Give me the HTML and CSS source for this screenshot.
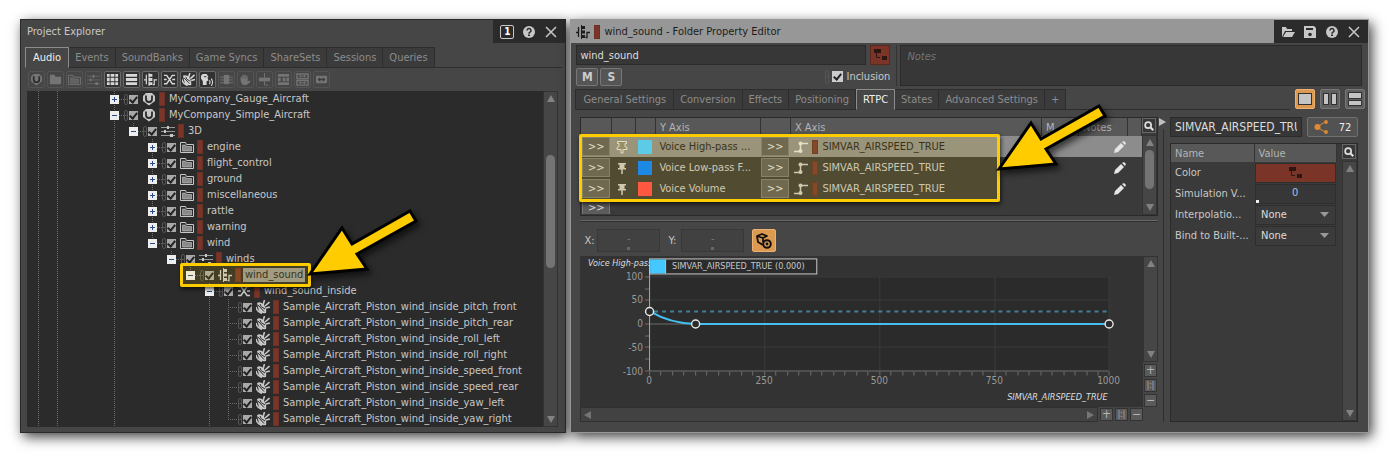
FILE: index.html
```
<!DOCTYPE html>
<html lang="en">
<head>
    <meta charset="UTF-8">
    <meta name="viewport" content="width=device-width, initial-scale=1.0">
    <title>wind_sound - Folder Property Editor</title>
    <link rel="stylesheet" href="styles.css">
</head>
<body>
    <!-- Icon sprite -->
    <svg class="sprite" width="0" height="0" aria-hidden="true">
        <symbol id="i-unit" viewBox="0 0 14 14"><path d="M4 1h6l3 3v5l-6 4.500L1 9V4z" fill="currentColor"/><path d="M4 3.500V7a3 3 0 0 0 6 0V3.500" fill="none" stroke="#2b2b2b" stroke-width="1.800"/></symbol>
        <symbol id="i-folder" viewBox="0 0 14 14"><path d="M.5 2.500h5l1 2h7v8H.5z" fill="none" stroke="currentColor"/><path d="M2.500 5h3l1 1.500h5V11h-9z" fill="currentColor" fill-opacity=".6" stroke="currentColor" stroke-opacity=".6"/></symbol>
        <symbol id="i-folder-full" viewBox="0 0 14 14"><path d="M1 2h5l1 2h6v8H1z" fill="currentColor"/></symbol>
        <symbol id="i-mixer" viewBox="0 0 14 14"><path d="M0 3.500h14M0 7.500h14M0 11.500h14" stroke="currentColor" stroke-opacity=".7"/><path d="M6 2h2v3H6zM3 6h2v3H3zM9 10h3v3H9z" fill="currentColor"/></symbol>
        <symbol id="i-grid" viewBox="0 0 14 14"><path d="M1 1h3v3H1zM5 1h4v3H5zM10 1h3v3h-3zM1 5h3v4H1zM5 5h4v4H5zM10 5h3v4h-3zM1 10h3v3H1zM5 10h4v3H5zM10 10h3v3h-3z" fill="currentColor"/></symbol>
        <symbol id="i-list" viewBox="0 0 14 14"><path d="M1 1h12v3H1zM1 5.500h12v3H1zM1 10h12v3H1z" fill="currentColor"/></symbol>
        <symbol id="i-actor" viewBox="0 0 14 14"><path d="M0 7.500h2.500M2.500 2v10M9.500 12.500h1.500v-5h3" fill="none" stroke="currentColor" stroke-width="1.300"/><path d="M5 1h4v3H5zM5 5.500h4v3H5zM5 10h4v3H5z" fill="currentColor"/><path d="M5.500 0v14" stroke="currentColor"/></symbol>
        <symbol id="i-random" viewBox="0 0 14 14"><path d="M1 2.500h3l6 9h3M1 11.500h3l6-9h3M1 7h3M10 7h3" fill="none" stroke="currentColor" stroke-width="1.500"/></symbol>
        <symbol id="i-sfx" viewBox="0 0 14 14"><path d="M1 3q4-2 7 2t2 8q-5 1-7-2z" fill="currentColor"/><path d="M0 7q1 5 6 6.500" fill="none" stroke="currentColor" stroke-width="1.500"/><path d="M2 5l6 6.500M4 4q0 3 5 5" fill="none" stroke="#2b2b2b"/><path d="M7 5l1.500-5M9 6l4.500-4M10 8l4-1" stroke="currentColor" stroke-width="1.600"/></symbol>
        <symbol id="i-voice" viewBox="0 0 14 14"><path d="M2 1h4l2 3-1 1 1 3-2 1v4H2V9L0 6V3z" fill="currentColor"/><path d="M3 4h3" stroke="#333"/><path d="M9 8q1.500 2 0 4M11 6q3 4 0 8" fill="none" stroke="currentColor" stroke-width="1.200"/></symbol>
        <symbol id="i-chip" viewBox="0 0 14 14"><path d="M4 2h6v10H4z" fill="currentColor"/><path d="M0 4.500h4M0 7.500h4M10 4.500h4M10 7.500h4M0 10.500h4M10 10.500h4" stroke="currentColor"/></symbol>
        <symbol id="i-hand" viewBox="0 0 14 14"><path d="M2.500 8V4M4.500 8V2M6.500 8V2M8.500 8V3" stroke="currentColor" stroke-width="1.500"/><path d="M2 6h7v3l3-1v2l-4 3H4L2 10z" fill="currentColor"/></symbol>
        <symbol id="i-bus" viewBox="0 0 14 14"><path d="M1 5h12v4H1z" fill="currentColor"/><path d="M7 0v5M7 9v4h4" fill="none" stroke="currentColor"/></symbol>
        <symbol id="i-rack" viewBox="0 0 14 14"><path d="M1 1h12v3H1zM1 5h3v4H1zM6 5h3v4H6zM10 5h3v4h-3zM1 10h12v3H1z" fill="currentColor"/></symbol>
        <symbol id="i-switch" viewBox="0 0 14 14"><path d="M1 1h12v5H1zM1 8h12v5H1z" fill="none" stroke="currentColor" stroke-width="1.500"/><path d="M3 3.500h8M3 10.500h8M5 2v3M9 2v3M5 9v3M9 9v3" stroke="currentColor"/></symbol>
        <symbol id="i-link" viewBox="0 0 14 14"><rect x="1" y="3" width="12" height="8" rx="1" fill="currentColor"/><path d="M3 7h8M5 5v4M9 5v4" stroke="#3c3c3c" stroke-width="1.500"/></symbol>
        <symbol id="i-help" viewBox="0 0 14 14"><circle cx="7" cy="7" r="6" fill="currentColor"/><path d="M5 5.500a2 2 0 1 1 3 1.700Q7 7.500 7 8.700" fill="none" stroke="#2b2b2b" stroke-width="1.500"/><path d="M6 9.500h2v1.500H6z" fill="#2b2b2b"/></symbol>
        <symbol id="i-close" viewBox="0 0 14 14"><path d="M2 2l10 10M12 2L2 12" stroke="currentColor" stroke-width="1.500"/></symbol>
        <symbol id="i-open" viewBox="0 0 14 14"><path d="M1 12V2h4l1 2h5v2H4z" fill="currentColor"/><path d="M5 7h9l-3 5H2z" fill="currentColor"/></symbol>
        <symbol id="i-save" viewBox="0 0 14 14"><path d="M1 1h10l2 2v10H1z" fill="currentColor"/><path d="M3 3h7v2H3z" fill="#2b2b2b"/><circle cx="7" cy="9.500" r="1.800" fill="#2b2b2b"/></symbol>
        <symbol id="i-find" viewBox="0 0 14 14"><circle cx="6" cy="6" r="3.500" fill="none" stroke="currentColor" stroke-width="2"/><path d="M8.500 8.500L12 12" stroke="currentColor" stroke-width="2.500"/></symbol>
        <symbol id="i-tree" viewBox="0 0 14 14"><path d="M1 1h7v4H1zM9 8h5v4H9z" fill="#2d1712"/><path d="M3.500 5v4.500H7" fill="none" stroke="#2d1712"/></symbol>
        <symbol id="i-pin" viewBox="0 0 14 14"><path d="M3 2h8v1.500H9.500V7H11v1.500H3V7h1.500V3.500H3z" fill="currentColor"/><path d="M7 8v5" stroke="currentColor" stroke-width="1.500"/></symbol>
        <symbol id="i-pin-line" viewBox="0 0 14 14"><path d="M2.500 1.500h9v2H10v3l2 1v2H8V13H6V9.500H2v-2l2-1v-3H2.500z" fill="#8a8672" stroke="currentColor"/></symbol>
        <symbol id="i-curve" viewBox="0 0 14 14"><path d="M0 11.500h6.500v-8H14" fill="none" stroke="currentColor" stroke-width="1.500"/><circle cx="6.500" cy="3.500" r="2" fill="currentColor"/><circle cx="6.500" cy="11" r="2" fill="currentColor"/></symbol>
        <symbol id="i-pencil" viewBox="0 0 14 14"><path d="M1 13l1-4 6-6 3 3-6 6zM9 2l2-1 2 2-1 2z" fill="#e6e6e6"/></symbol>
        <symbol id="i-share" viewBox="0 0 14 14"><path d="M11 2L3 7l8 5" fill="none" stroke="currentColor"/><circle cx="3.500" cy="7" r="3" fill="currentColor"/><circle cx="12" cy="2" r="1.900" fill="currentColor"/><circle cx="12" cy="12" r="1.900" fill="currentColor"/></symbol>
        <symbol id="i-view" viewBox="0 0 18 16"><path d="M2 3l5-2 5 2-4 2zM2 3l1 6 5 3M8 5v4" fill="none" stroke="#111" stroke-width="1.800" stroke-linejoin="round"/><circle cx="12" cy="11" r="3.800" fill="#dc9a51" stroke="#111" stroke-width="2"/><circle cx="12" cy="11" r="1.400" fill="#111"/></symbol>
        <symbol id="i-arrow" viewBox="0 0 116 78"><path d="M6 71L38 25l10 16 58-33 6 10-59 33 10 15z" fill="#fc0" stroke="#000" stroke-width="3"/></symbol>
    </svg>

    <main class="workspace">
        <!-- Project Explorer -->
        <section class="panel explorer">
            <header class="titlebar">
                <h1>Project Explorer</h1>
                <div class="window-buttons">
                    <button class="count">1</button>
                    <button aria-label="Help"><svg><use href="#i-help"/></svg></button>
                    <button aria-label="Close"><svg><use href="#i-close"/></svg></button>
                </div>
            </header>
            <nav class="tabs">
                <button class="active">Audio</button><button>Events</button><button>SoundBanks</button><button>Game Syncs</button><button>ShareSets</button><button>Sessions</button><button>Queries</button>
            </nav>
            <div class="toolbar">
                <button disabled><svg><use href="#i-unit"/></svg></button>
                <button disabled><svg><use href="#i-folder-full"/></svg></button>
                <button disabled><svg><use href="#i-folder"/></svg></button>
                <button disabled><svg><use href="#i-mixer"/></svg></button>
                <button><svg><use href="#i-grid"/></svg></button>
                <button><svg><use href="#i-list"/></svg></button>
                <button><svg><use href="#i-actor"/></svg></button>
                <button><svg><use href="#i-random"/></svg></button>
                <button><svg><use href="#i-sfx"/></svg></button>
                <button><svg><use href="#i-voice"/></svg></button>
                <button disabled><svg><use href="#i-chip"/></svg></button>
                <button disabled><svg><use href="#i-hand"/></svg></button>
                <button disabled><svg><use href="#i-bus"/></svg></button>
                <button disabled><svg><use href="#i-rack"/></svg></button>
                <button disabled><svg><use href="#i-switch"/></svg></button>
                <button disabled><svg><use href="#i-link"/></svg></button>
            </div>
            <div class="tree-box">
                <ul class="tree">
                    <li><div class="node"><button class="toggle plus"></button><i class="dots"></i><i class="pill"></i><input type="checkbox" id="n1" checked><svg><use href="#i-unit"/></svg><i class="bar"></i><label for="n1">MyCompany_Gauge_Aircraft</label></div></li>
                    <li><div class="node"><button class="toggle"></button><i class="dots"></i><i class="pill"></i><input type="checkbox" id="n2" checked><svg><use href="#i-unit"/></svg><i class="bar"></i><label for="n2">MyCompany_Simple_Aircraft</label></div>
                        <ul>
                            <li class="last"><div class="node"><button class="toggle"></button><i class="dots"></i><i class="pill"></i><input type="checkbox" id="n3" checked><svg><use href="#i-mixer"/></svg><i class="bar"></i><label for="n3">3D</label></div>
                                <ul>
                                    <li><div class="node"><button class="toggle plus"></button><i class="dots"></i><i class="pill"></i><input type="checkbox" id="n4" checked><svg><use href="#i-folder"/></svg><i class="bar"></i><label for="n4">engine</label></div></li>
                                    <li><div class="node"><button class="toggle plus"></button><i class="dots"></i><i class="pill"></i><input type="checkbox" id="n5" checked><svg><use href="#i-folder"/></svg><i class="bar"></i><label for="n5">flight_control</label></div></li>
                                    <li><div class="node"><button class="toggle plus"></button><i class="dots"></i><i class="pill"></i><input type="checkbox" id="n6" checked><svg><use href="#i-folder"/></svg><i class="bar"></i><label for="n6">ground</label></div></li>
                                    <li><div class="node"><button class="toggle plus"></button><i class="dots"></i><i class="pill"></i><input type="checkbox" id="n7" checked><svg><use href="#i-folder"/></svg><i class="bar"></i><label for="n7">miscellaneous</label></div></li>
                                    <li><div class="node"><button class="toggle plus"></button><i class="dots"></i><i class="pill"></i><input type="checkbox" id="n8" checked><svg><use href="#i-folder"/></svg><i class="bar"></i><label for="n8">rattle</label></div></li>
                                    <li><div class="node"><button class="toggle plus"></button><i class="dots"></i><i class="pill"></i><input type="checkbox" id="n9" checked><svg><use href="#i-folder"/></svg><i class="bar"></i><label for="n9">warning</label></div></li>
                                    <li class="last"><div class="node"><button class="toggle"></button><i class="dots"></i><i class="pill"></i><input type="checkbox" id="n10" checked><svg><use href="#i-folder"/></svg><i class="bar"></i><label for="n10">wind</label></div>
                                        <ul>
                                            <li class="last"><div class="node"><button class="toggle"></button><i class="dots"></i><i class="pill"></i><input type="checkbox" id="n11" checked><svg><use href="#i-mixer"/></svg><i class="bar"></i><label for="n11">winds</label></div>
                                                <ul>
                                                    <li class="last"><div class="node selected"><button class="toggle"></button><i class="dots"></i><i class="pill"></i><input type="checkbox" id="n12" checked><svg><use href="#i-actor"/></svg><i class="bar"></i><label for="n12">wind_sound</label><div class="callout"></div><svg class="arrow"><use href="#i-arrow"/></svg></div>
                                                        <ul>
                                                            <li><div class="node"><button class="toggle"></button><i class="dots"></i><i class="pill"></i><input type="checkbox" id="n13" checked><svg><use href="#i-random"/></svg><i class="bar"></i><label for="n13">wind_sound_inside</label></div>
                                                                <ul class="leaves">
                                                                    <li><div class="node"><i class="dots"></i><i class="pill"></i><input type="checkbox" id="s1" checked><svg><use href="#i-sfx"/></svg><i class="bar"></i><label for="s1">Sample_Aircraft_Piston_wind_inside_pitch_front</label></div></li>
                                                                    <li><div class="node"><i class="dots"></i><i class="pill"></i><input type="checkbox" id="s2" checked><svg><use href="#i-sfx"/></svg><i class="bar"></i><label for="s2">Sample_Aircraft_Piston_wind_inside_pitch_rear</label></div></li>
                                                                    <li><div class="node"><i class="dots"></i><i class="pill"></i><input type="checkbox" id="s3" checked><svg><use href="#i-sfx"/></svg><i class="bar"></i><label for="s3">Sample_Aircraft_Piston_wind_inside_roll_left</label></div></li>
                                                                    <li><div class="node"><i class="dots"></i><i class="pill"></i><input type="checkbox" id="s4" checked><svg><use href="#i-sfx"/></svg><i class="bar"></i><label for="s4">Sample_Aircraft_Piston_wind_inside_roll_right</label></div></li>
                                                                    <li><div class="node"><i class="dots"></i><i class="pill"></i><input type="checkbox" id="s5" checked><svg><use href="#i-sfx"/></svg><i class="bar"></i><label for="s5">Sample_Aircraft_Piston_wind_inside_speed_front</label></div></li>
                                                                    <li><div class="node"><i class="dots"></i><i class="pill"></i><input type="checkbox" id="s6" checked><svg><use href="#i-sfx"/></svg><i class="bar"></i><label for="s6">Sample_Aircraft_Piston_wind_inside_speed_rear</label></div></li>
                                                                    <li><div class="node"><i class="dots"></i><i class="pill"></i><input type="checkbox" id="s7" checked><svg><use href="#i-sfx"/></svg><i class="bar"></i><label for="s7">Sample_Aircraft_Piston_wind_inside_yaw_left</label></div></li>
                                                                    <li class="last"><div class="node"><i class="dots"></i><i class="pill"></i><input type="checkbox" id="s8" checked><svg><use href="#i-sfx"/></svg><i class="bar"></i><label for="s8">Sample_Aircraft_Piston_wind_inside_yaw_right</label></div></li>
                                                                </ul>
                                                            </li>
                                                        </ul>
                                                    </li>
                                                </ul>
                                            </li>
                                        </ul>
                                    </li>
                                </ul>
                            </li>
                        </ul>
                    </li>
                </ul>
                <div class="vscroll"><i class="up"></i><i class="thumb tree-thumb"></i><i class="down"></i></div>
            </div>
        </section>

        <!-- Property Editor -->
        <section class="panel editor">
            <header class="titlebar">
                <svg><use href="#i-actor"/></svg><i class="bar"></i>
                <h1>wind_sound - Folder Property Editor</h1>
                <div class="window-buttons">
                    <button aria-label="Open"><svg><use href="#i-open"/></svg></button>
                    <button aria-label="Save"><svg><use href="#i-save"/></svg></button>
                    <button aria-label="Help"><svg><use href="#i-help"/></svg></button>
                    <button aria-label="Close"><svg><use href="#i-close"/></svg></button>
                </div>
            </header>
            <div class="object-info">
                <div class="object-main">
                    <div class="name-row">
                        <input type="text" class="name" aria-label="Name" value="wind_sound">
                        <button class="color" aria-label="Color"><svg><use href="#i-tree"/></svg></button>
                    </div>
                    <div class="flag-row">
                        <button class="flag">M</button>
                        <button class="flag">S</button>
                        <i class="pill"></i>
                        <input type="checkbox" id="inclusion" checked>
                        <label for="inclusion">Inclusion</label>
                    </div>
                </div>
                <textarea class="notes" aria-label="Notes" placeholder="Notes"></textarea>
            </div>
            <div class="tab-row">
                <nav class="tabs">
                    <button>General Settings</button><button>Conversion</button><button>Effects</button><button>Positioning</button><button class="active">RTPC</button><button>States</button><button>Advanced Settings</button><button>+</button>
                </nav>
                <div class="layouts">
                    <button class="on" aria-label="Single"><i></i></button>
                    <button class="cols" aria-label="Columns"><i></i><i></i></button>
                    <button class="rows" aria-label="Rows"><i></i><i></i></button>
                </div>
            </div>
            <div class="content">
                <div class="rtpc">
                    <div class="grid-box">
                        <table class="curves">
                            <colgroup><col class="c30"><col class="c24"><col class="c19"><col class="c105"><col class="c30"><col><col class="c37"><col class="c49"><col class="c14"></colgroup>
                            <thead>
                                <tr><th></th><th></th><th></th><th>Y Axis</th><th></th><th>X Axis</th><th>M...</th><th>Notes</th><th></th></tr>
                            </thead>
                            <tbody>
                                <tr class="current">
                                    <td><button class="more">&gt;&gt;</button></td>
                                    <td><svg><use href="#i-pin-line"/></svg></td>
                                    <td><i class="swatch cyan"></i></td>
                                    <td>Voice High-pass ...</td>
                                    <td><button class="more">&gt;&gt;</button></td>
                                    <td><div class="axis"><svg><use href="#i-curve"/></svg><i class="bar"></i>SIMVAR_AIRSPEED_TRUE</div></td>
                                    <td></td>
                                    <td class="pencil" colspan="2"><svg><use href="#i-pencil"/></svg></td>
                                </tr>
                                <tr>
                                    <td><button class="more">&gt;&gt;</button></td>
                                    <td><svg><use href="#i-pin"/></svg></td>
                                    <td><i class="swatch blue"></i></td>
                                    <td>Voice Low-pass F...</td>
                                    <td><button class="more">&gt;&gt;</button></td>
                                    <td><div class="axis"><svg><use href="#i-curve"/></svg><i class="bar"></i>SIMVAR_AIRSPEED_TRUE</div></td>
                                    <td></td>
                                    <td class="pencil" colspan="2"><svg><use href="#i-pencil"/></svg></td>
                                </tr>
                                <tr>
                                    <td><button class="more">&gt;&gt;</button></td>
                                    <td><svg><use href="#i-pin"/></svg></td>
                                    <td><i class="swatch red"></i></td>
                                    <td>Voice Volume</td>
                                    <td><button class="more">&gt;&gt;</button></td>
                                    <td><div class="axis"><svg><use href="#i-curve"/></svg><i class="bar"></i>SIMVAR_AIRSPEED_TRUE</div></td>
                                    <td></td>
                                    <td class="pencil" colspan="2"><svg><use href="#i-pencil"/></svg></td>
                                </tr>
                                <tr class="blank"><td><button class="more">&gt;&gt;</button></td><td colspan="8"></td></tr>
                            </tbody>
                        </table>
                        <div class="side">
                            <button class="find" aria-label="Find"><svg><use href="#i-find"/></svg></button>
                            <div class="vscroll"><i class="up"></i><i class="thumb"></i><i class="down"></i></div>
                        </div>
                        <div class="callout"></div>
                        <svg class="arrow"><use href="#i-arrow"/></svg>
                    </div>
                    <div class="coords">
                        <label for="px">X:</label><input type="text" id="px" value="-" disabled>
                        <label for="py">Y:</label><input type="text" id="py" value="-" disabled>
                        <button class="view" aria-label="View options"><svg><use href="#i-view"/></svg></button>
                    </div>
                    <div class="graph">
                        <svg class="plot" viewBox="0 0 562 150">
                            <rect x="69" y="20" width="459" height="94" fill="#2b2b2b"/>
                            <path d="M69 20.500h459.500V114M69 43.500h459M69 90.500h459M184.500 20v94M299.500 20v94M414.500 20v94" fill="none" stroke="#3b3b3b"/>
                            <path d="M69 67.500h459M69 114.500h459" stroke="#6e6e6e"/>
                            <path d="M65 20.500h4M65 43.500h4M65 67.500h4M65 90.500h4M65 114.500h4M65 32.500h4M65 55.500h4M65 79.500h4M65 102.500h4" stroke="#6e6e6e"/>
                            <path d="M69.500 115v4M80.500 115v4M92.500 115v4M103.500 115v4M115.500 115v4M126.500 115v4M138.500 115v4M149.500 115v4M161.500 115v4M172.500 115v4M184.500 115v4M195.500 115v4M207.500 115v4M218.500 115v4M230.500 115v4M241.500 115v4M253.500 115v4M264.500 115v4M276.500 115v4M287.500 115v4M299.500 115v4M310.500 115v4M322.500 115v4M333.500 115v4M345.500 115v4M356.500 115v4M368.500 115v4M379.500 115v4M391.500 115v4M402.500 115v4M414.500 115v4M425.500 115v4M437.500 115v4M448.500 115v4M460.500 115v4M471.500 115v4M483.500 115v4M494.500 115v4M506.500 115v4M517.500 115v4M528.500 115v4" stroke="#6e6e6e"/>
                            <path d="M69.500 10v104" stroke="#aaa"/>
                            <path d="M74 55h452" stroke="#40809a" stroke-width="2" stroke-dasharray="4 4"/>
                            <path d="M70 55Q90 67 115 67.500H528" fill="none" stroke="#44bff0" stroke-width="2"/>
                            <g fill="#2b2b2b" stroke="#e8e8e8" stroke-width="1.400"><circle cx="69.500" cy="55" r="4"/><circle cx="115.500" cy="67.500" r="4"/><circle cx="528.500" cy="67.500" r="4"/></g>
                            <g text-anchor="end"><text x="63" y="24">100</text><text x="63" y="47">50</text><text x="63" y="71">0</text><text x="63" y="94">-50</text><text x="63" y="118">-100</text></g>
                            <g text-anchor="middle"><text x="69" y="127">0</text><text x="184" y="127">250</text><text x="299" y="127">500</text><text x="414" y="127">750</text><text x="528" y="127">1000</text></g>
                            <text class="axis-name" x="8" y="10">Voice High-pass</text>
                            <text class="axis-name" x="527" y="143" text-anchor="end">SIMVAR_AIRSPEED_TRUE</text>
                            <rect x="69.500" y="2.500" width="167" height="15" fill="#2b2b2b" stroke="#c8c8c8"/>
                            <path d="M70 3h15v14H70z" fill="#44c8ff"/><path d="M85.500 3v14" stroke="#c8c8c8"/>
                            <text class="legend" x="92" y="13">SIMVAR_AIRSPEED_TRUE (0.000)</text>
                        </svg>
                        <div class="side">
                            <div class="vscroll"><i class="up"></i><i class="down"></i></div>
                            <button class="zoom">+</button><button class="zoom fit">|:|</button><button class="zoom">−</button>
                        </div>
                        <div class="hbar">
                            <div class="hscroll"><i class="left"></i><i class="right"></i></div>
                            <button class="zoom">+</button><button class="zoom fit">|:|</button><button class="zoom">−</button>
                        </div>
                    </div>
                </div>
                <div class="splitter"><i></i></div>
                <aside class="inspector">
                    <div class="param">
                        <input type="text" aria-label="Parameter" value="SIMVAR_AIRSPEED_TRUE">
                        <button class="refs"><svg><use href="#i-share"/></svg>72</button>
                    </div>
                    <div class="grid-box props-box">
                        <table class="props">
                            <colgroup><col class="c83"><col></colgroup>
                            <thead><tr><th>Name</th><th>Value</th></tr></thead>
                            <tbody>
                                <tr><td>Color</td><td><button class="color" aria-label="Color"><svg><use href="#i-tree"/></svg></button></td></tr>
                                <tr><td><label for="sim">Simulation V...</label></td><td><input type="text" class="number" id="sim" value="0"></td></tr>
                                <tr><td><label for="interp">Interpolatio...</label></td><td><select id="interp"><option>None</option></select></td></tr>
                                <tr><td><label for="bind">Bind to Built-...</label></td><td><select id="bind"><option>None</option></select></td></tr>
                            </tbody>
                        </table>
                        <div class="side">
                            <button class="find" aria-label="Find"><svg><use href="#i-find"/></svg></button>
                            <div class="vscroll"><i class="up"></i><i class="down"></i></div>
                        </div>
                    </div>
                </aside>
            </div>
        </section>
    </main>
</body>
</html>
```
FILE: styles.css
```
* {
    box-sizing: border-box;
}

body {
    margin: 0;
    background-color: #ffffff;
    color: #c8c8c8;
    font: 11px "DejaVu Sans Condensed", "Noto Sans", sans-serif;
}

button,
input,
select,
textarea {
    margin: 0;
    padding: 0;
    border: 0;
    border-radius: 0;
    outline: 0;
    background: none;
    color: inherit;
    font: inherit;
}

svg {
    display: block;
    width: 14px;
    height: 14px;
    flex: none;
}

i {
    flex: none;
}

.sprite {
    position: absolute;
    width: 0;
    height: 0;
}

.workspace {
    display: flex;
    gap: 4px;
    height: 100vh;
    min-height: 454px;
    padding: 19px 20px 21px;
}

/* Panels */
.panel {
    display: flex;
    flex-direction: column;
    background-color: #464646;
    border: 1px solid #2a2a2a;
    box-shadow: 3px 4px 12px rgba(0, 0, 0, 0.75);
}

.explorer {
    flex: 546 1 0;
    min-width: 0;
}

.editor {
    flex: 799 1 0;
    min-width: 0;
    border-color: #979797;
}

.titlebar {
    display: flex;
    align-items: center;
    height: 23px;
    flex: none;
    padding-left: 6px;
}

.titlebar h1 {
    margin: 0;
    font-size: 11px;
    font-weight: normal;
    flex: 1;
}

.editor .titlebar {
    background-color: #979797;
    color: #1c1c1c;
    padding-left: 5px;
    gap: 4px;
}

.window-buttons {
    display: flex;
    align-items: center;
    height: 23px;
    gap: 8px;
    padding: 0 7px;
    background-color: #2b2b2b;
    color: #c8c8c8;
}

.count {
    width: 14px;
    height: 14px;
    border: 1px solid #c8c8c8;
    border-radius: 2px;
    color: #ffffff;
    font-size: 10px;
    font-weight: bold;
    line-height: 12px;
}

.bar {
    width: 6px;
    height: 14px;
    background-color: #7a3528;
    border: 1px solid #6c3025;
}

/* Tabs */
.tabs {
    display: flex;
    flex: none;
    height: 21px;
    border-bottom: 1px solid #2d2d2d;
}

.explorer .tabs {
    margin: 4px 3px 0 4px;
}

.tabs button {
    height: 21px;
    padding: 0 6px;
    background-color: #3b3b3b;
    border: 1px solid #2d2d2d;
    border-left-width: 0;
    color: #8c8c8c;
}

.tabs button:first-child {
    padding: 0 7px;
    border-left-width: 1px;
}

.tabs .active {
    background-color: #464646;
    border: 1px solid #8c8c8c;
    border-bottom-color: #464646;
    color: #f0f0f0;
}

/* Toolbar */
.toolbar {
    display: flex;
    gap: 2px;
    padding: 3px 0 3px 7px;
}

.toolbar button {
    display: grid;
    place-items: center;
    width: 17px;
    height: 17px;
    background-color: #323232;
    border: 1px solid #6a6a6a;
    border-radius: 2px;
    color: #d8d8d8;
}

.toolbar svg {
    width: 13px;
    height: 13px;
}

.toolbar button:disabled {
    background-color: #464646;
    border-color: #535353;
    color: #747474;
}

/* Tree */
.tree-box {
    display: flex;
    flex: 1;
    min-height: 0;
    margin: 0 7px 5px 6px;
    background-color: #2b2b2b;
}

.tree {
    flex: 1;
    margin: 0;
    padding: 0 0 0 83px;
    background-image: repeating-linear-gradient(#6c6c6c 0 1px, transparent 1px 2px), repeating-linear-gradient(#6c6c6c 0 1px, transparent 1px 2px);
    background-size: 1px 100%;
    background-position: 11px 0, 30px 0;
    background-repeat: no-repeat;
}

.tree ul {
    margin: 0;
    padding: 0 0 0 19px;
}

.tree li {
    list-style: none;
    background-image: repeating-linear-gradient(#6c6c6c 0 1px, transparent 1px 2px);
    background-size: 1px 100%;
    background-position: 4px 0;
    background-repeat: no-repeat;
}

.tree li.last {
    background-size: 1px 8px;
}

.node {
    display: flex;
    align-items: center;
    height: 16px;
    position: relative;
}

.node svg {
    margin: 0 3px;
}

.node label {
    margin-left: 2px;
    padding: 0 2px;
    line-height: 14px;
    white-space: nowrap;
}

.toggle {
    width: 9px;
    height: 9px;
    background: linear-gradient(#2c4a8c, #2c4a8c) center / 5px 1px no-repeat, #eeeeee;
}

.toggle.plus {
    background: linear-gradient(#2c4a8c, #2c4a8c) center / 5px 1px no-repeat, linear-gradient(#2c4a8c, #2c4a8c) center / 1px 5px no-repeat, #eeeeee;
}

.dots {
    width: 5px;
    height: 1px;
    background-image: repeating-linear-gradient(90deg, #6c6c6c 0 1px, transparent 1px 2px);
}

.leaves .dots {
    width: 10px;
    margin-left: 4px;
}

.pill {
    width: 4px;
    height: 11px;
    border: 1px solid #555555;
    border-radius: 2px;
    background: linear-gradient(#555555, #555555) center / 100% 1px no-repeat;
}

input[type="checkbox"] {
    appearance: none;
    display: grid;
    place-items: center;
    flex: none;
    width: 9px;
    height: 9px;
    margin: 0 1px;
    background-color: #a8a8a8;
}

input[type="checkbox"]::after {
    content: "";
    width: 3px;
    height: 6px;
    margin-bottom: 2px;
    border: solid #222222;
    border-width: 0 2px 2px 0;
    transform: rotate(40deg);
}

.selected label {
    background-color: #959595;
    color: #1c1c1c;
}

/* Yellow callouts */
.callout {
    position: absolute;
    border: 3px solid #ffcc00;
    border-radius: 2px;
    background-color: rgba(255, 204, 0, 0.12);
    box-shadow: 1px 2px 4px rgba(0, 0, 0, 0.7);
}

.node .callout {
    inset: -4px auto -4px -6px;
    width: 131px;
    z-index: 1;
}

svg.arrow {
    position: absolute;
    z-index: 2;
    width: 116px;
    height: 78px;
    margin: 0;
    filter: drop-shadow(3px 4px 3px rgba(0, 0, 0, 0.6));
}

.node svg.arrow {
    left: 118px;
    top: -64px;
}

.grid-box svg.arrow {
    right: 48px;
    top: -20px;
}

.grid-box > .callout {
    inset: 16px 157px 13px -2px;
}

/* Scroll bars */
.vscroll {
    display: flex;
    flex-direction: column;
    align-items: center;
    width: 15px;
    flex: 1;
    padding: 3px 0;
    background-color: #464646;
    border: 1px solid #333333;
}

.tree-box .vscroll {
    flex: none;
}

.up,
.down {
    border: 4px solid transparent;
    border-bottom: 7px solid #828282;
    border-top-width: 0;
}

.down {
    margin-top: auto;
    border-top: 7px solid #828282;
    border-bottom-width: 0;
}

.thumb {
    width: 9px;
    height: 39px;
    margin-top: 4px;
    border-radius: 5px;
    background-color: #747474;
}

.tree-thumb {
    height: 113px;
    margin-top: 53px;
}

.hscroll {
    display: flex;
    align-items: center;
    justify-content: space-between;
    flex: 1;
    height: 15px;
    padding: 0 3px;
    background-color: #424242;
    border: 1px solid #303030;
}

.left,
.right {
    border: 4px solid transparent;
    border-right: 7px solid #747474;
    border-left-width: 0;
}

.right {
    border-left: 7px solid #747474;
    border-right-width: 0;
}

/* Object info */
.object-info {
    display: flex;
    gap: 3px;
    padding: 2px 6px 0 5px;
}

.object-main {
    flex: 0 0 321px;
    padding-right: 6px;
    border-right: 1px solid #333333;
}

.name-row,
.flag-row {
    display: flex;
    align-items: center;
}

.name-row {
    gap: 4px;
}

.name {
    flex: 1;
    min-width: 0;
    height: 20px;
    padding: 0 3px;
    background-color: #373737;
    border: 1px solid #2a2a2a;
    color: #dddddd;
}

.color {
    display: grid;
    place-items: center;
    width: 20px;
    height: 20px;
    background-color: #7a3528;
    border: 1px solid #5c281e;
}

.flag-row {
    gap: 2px;
    padding-top: 2px;
    height: 21px;
}

.flag {
    width: 22px;
    height: 18px;
    background-color: #555555;
    border: 1px solid #777777;
    border-radius: 2px;
    color: #cccccc;
    font-size: 12px;
    font-weight: bold;
}

.flag-row .pill {
    height: 14px;
    margin-left: auto;
}

.flag-row input[type="checkbox"] {
    width: 11px;
    height: 11px;
    background-color: #cccccc;
}

.notes {
    flex: 1;
    height: 41px;
    padding: 4px 6px;
    background-color: #373737;
    border: 1px solid #2a2a2a;
    resize: none;
}

.notes::placeholder {
    color: #747474;
    font-style: italic;
}

.tab-row {
    display: flex;
    gap: 5px;
    padding: 3px 3px 0 4px;
}

.tab-row .tabs {
    flex: 1;
}

.layouts {
    display: flex;
    gap: 5px;
}

.layouts button {
    display: flex;
    gap: 2px;
    width: 20px;
    height: 20px;
    padding: 3px 2px;
    background-color: #606060;
    border: 1px solid #777777;
    border-radius: 2px;
}

.layouts i {
    flex: 1;
    background-color: #c4c4c4;
    border: 1px solid #303030;
}

.layouts .rows {
    flex-direction: column;
    padding: 2px;
    gap: 1px;
}

.layouts .on {
    background-color: #dc9a51;
    border-color: #eeb070;
}

/* Content */
.content {
    display: flex;
    flex: 1;
    min-height: 0;
    padding: 7px 10px 10px 9px;
}

.rtpc {
    display: flex;
    flex-direction: column;
    flex: 1;
    min-width: 0;
}

.grid-box {
    position: relative;
    display: flex;
    height: 99px;
    background-color: #3a3a3a;
    border: 1px solid #2a2a2a;
}

.side {
    display: flex;
    flex-direction: column;
    width: 15px;
    flex: none;
    gap: 2px;
}

table {
    flex: 1;
    min-width: 0;
    align-self: flex-start;
    table-layout: fixed;
    border-collapse: collapse;
}

.c14 { width: 14px; }
.c19 { width: 19px; }
.c24 { width: 24px; }
.c30 { width: 30px; }
.c37 { width: 37px; }
.c49 { width: 49px; }
.c83 { width: 83px; }
.c105 { width: 105px; }

th {
    height: 18px;
    padding: 0 4px;
    background-color: #585858;
    border-right: 1px solid #333333;
    color: #b4b4b4;
    font-weight: normal;
    text-align: left;
    white-space: nowrap;
}

td {
    height: 21px;
    padding: 0 4px;
    white-space: nowrap;
}

.current {
    background-color: #8c8c8c;
    color: #1c1c1c;
}

.current svg,
.curves .more {
    color: #e0e0e0;
}

.curves td:nth-child(1),
.curves td:nth-child(5) {
    padding: 0 1px;
}

.curves td:nth-child(3) {
    padding: 0 3px;
}

.more {
    display: block;
    width: 28px;
    height: 19px;
    background-color: #5c5c5c;
    border: 1px solid #787878;
    font-size: 11px;
}

.blank td {
    height: 15px;
}

.blank .more {
    height: 15px;
    line-height: 13px;
    border-bottom: 0;
}

.swatch {
    display: block;
    width: 14px;
    height: 14px;
}

.cyan { background-color: #5ccbe8; }
.blue { background-color: #1e88e5; }
.red { background-color: #ff5740; }

.swatch,
.curves tbody .bar {
    position: relative;
    z-index: 1;
}

.curves tbody .bar {
    background-color: #84482a;
    border-color: #744020;
}

.axis {
    display: flex;
    align-items: center;
    gap: 4px;
}

.pencil svg {
    margin: 0 11px 0 auto;
}

.find {
    display: grid;
    place-items: center;
    width: 14px;
    height: 15px;
    flex: none;
    background-color: #373737;
    border: 1px solid #666666;
    color: #dddddd;
}

.find svg {
    width: 12px;
    height: 12px;
}

.coords {
    display: flex;
    align-items: center;
    margin-top: 4px;
    padding: 8px 4px 4px;
    border-top: 1px solid #666666;
    box-shadow: inset 0 1px #303030;
}

.coords label {
    width: 13px;
}

.coords input {
    width: 63px;
    height: 23px;
    margin-right: 8px;
    padding-bottom: 4px;
    background: linear-gradient(#666666, #666666) center bottom 1px / 3px 3px no-repeat, #414141;
    border: 1px solid #383838;
    color: #777777;
    text-align: center;
}

.view {
    display: grid;
    place-items: center;
    width: 24px;
    height: 23px;
    background-color: #dc9a51;
    border: 1px solid #eeb070;
    border-radius: 2px;
}

.view svg {
    width: 18px;
    height: 16px;
}

/* Graph */
.graph {
    display: grid;
    grid-template-columns: 1fr 15px;
    grid-template-rows: 1fr 15px;
    flex: 1;
    min-height: 0;
}

.plot {
    width: 100%;
    height: 100%;
    background-color: #333333;
}

.plot text {
    fill: #999999;
    font-size: 10px;
}

.plot .axis-name {
    fill: #dddddd;
    font-size: 9px;
    font-style: italic;
}

.plot .legend {
    fill: #c8c8c8;
    font-size: 9px;
}

.hbar {
    display: flex;
    gap: 2px;
}

.zoom {
    display: grid;
    place-items: center;
    width: 13px;
    height: 13px;
    flex: none;
    background-color: #5a5a5a;
    border: 1px solid #333333;
    color: #b4b4b4;
    font-size: 12px;
    line-height: 11px;
}

.zoom.fit {
    font-size: 8px;
}

.side .zoom {
    margin-left: 1px;
}

.hbar .zoom {
    margin-top: 1px;
}

/* Inspector */
.splitter {
    width: 12px;
    flex: none;
    padding-left: 1px;
    background: linear-gradient(#2e2e2e, #2e2e2e) 5px 12px / 1px 100% no-repeat;
}

.splitter i {
    display: block;
    border: 4px solid transparent;
    border-left: 7px solid #c0c0c0;
    border-right-width: 0;
    width: 0;
    margin-top: 1px;
}

.inspector {
    display: flex;
    flex-direction: column;
    width: 188px;
    flex: none;
}

.param {
    display: flex;
    gap: 5px;
    margin-bottom: 6px;
}

.param input {
    flex: 1;
    min-width: 0;
    height: 20px;
    padding: 0 4px;
    background-color: #373737;
    border: 1px solid #2a2a2a;
    color: #dddddd;
    font-size: 12px;
}

.refs {
    display: flex;
    align-items: center;
    justify-content: space-around;
    width: 51px;
    height: 20px;
    background-color: #525252;
    border: 1px solid #707070;
    border-radius: 2px;
    color: #eeeeee;
}

.refs svg {
    color: #e08a30;
}

.props-box {
    flex: 1;
    min-height: 0;
}

.props {
    margin-right: 5px;
}

.props td:last-child {
    padding: 0 1px;
}

.props .color,
.number,
select {
    width: 100%;
    height: 20px;
    border: 1px solid #2e2e2e;
}

.props .color {
    background-color: #7a3528;
}

.number {
    display: block;
    padding-bottom: 2px;
    background: linear-gradient(#eeeeee, #eeeeee) 0 100% / 3px 3px no-repeat, #373737;
    color: #9fc4e8;
    text-align: center;
}

select {
    appearance: none;
    display: block;
    padding: 0 5px;
    background: url("data:image/svg+xml,%3Csvg xmlns='http://www.w3.org/2000/svg' width='9' height='5'%3E%3Cpath d='M0 0h9L4.500 5z' fill='%23999'/%3E%3C/svg%3E") right 6px center no-repeat, #3b3b3b;
    color: #dddddd;
}
```
